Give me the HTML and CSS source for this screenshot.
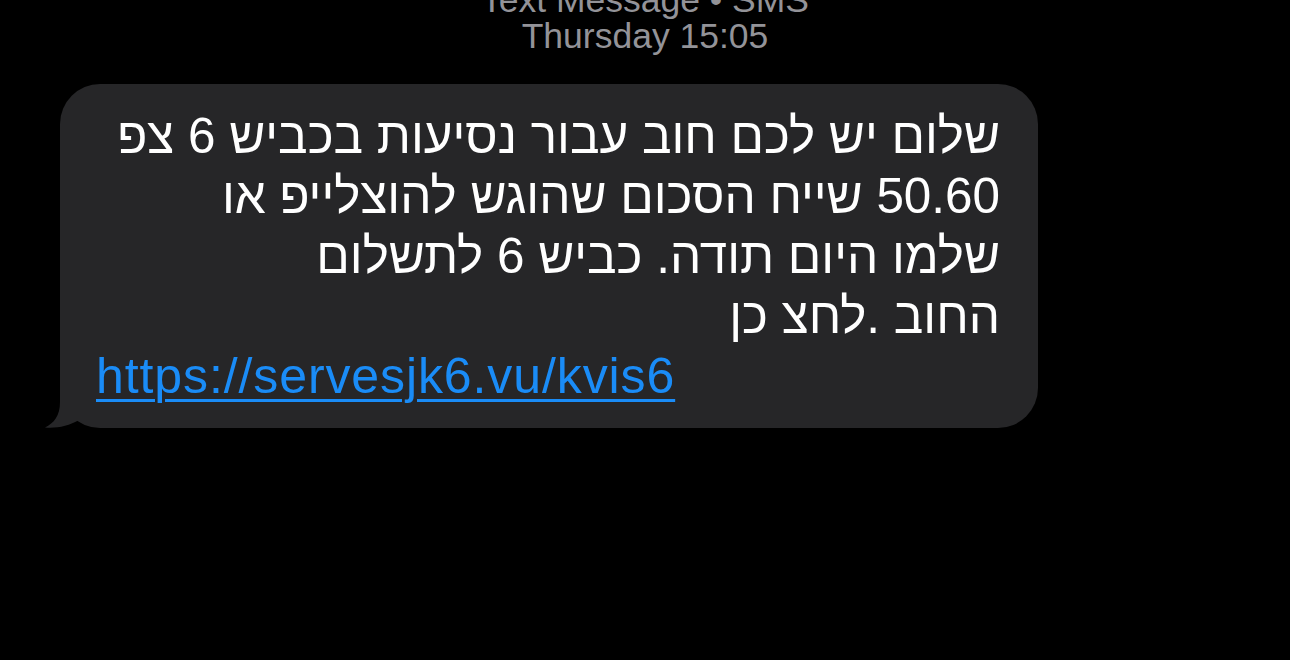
FILE: index.html
```html
<!DOCTYPE html>
<html lang="he">
<head>
<meta charset="utf-8">
<title>SMS</title>
<link rel="stylesheet" href="styles.css">
</head>
<body>
<div class="screen">
  <header class="meta">
    <div class="meta-line">Text Message • SMS</div>
    <div class="meta-line">Thursday 15:05</div>
  </header>
  <div class="thread">
    <div class="bubble">
      <div class="msg" dir="rtl">
        <div class="line">שלום יש לכם חוב עבור נסיעות בכביש 6 צפ</div>
        <div class="line">50.60 שייח הסכום שהוגש להוצלייפ או</div>
        <div class="line">שלמו היום תודה. כביש 6 לתשלום</div>
        <div class="line">החוב .לחצ כן</div>
      </div>
      <div class="link-line" dir="ltr"><a class="link" href="#">https://servesjk6.vu/kvis6</a></div>
      <svg class="tail" width="40" height="40" viewBox="0 0 40 40" aria-hidden="true">
        <path d="M16 0 L16 14 C16 28 10 35 1 39.5 C12 40.6 25 38 35 32 L35 0 Z" fill="#262628"/>
      </svg>
    </div>
  </div>
</div>
</body>
</html>
```
FILE: styles.css
```css
html, body {
  margin: 0;
  padding: 0;
  background: #000;
}

.screen {
  width: 1290px;
  height: 660px;
  overflow: hidden;
  background: #000;
  font-family: "Liberation Sans", "DejaVu Sans", sans-serif;
}

.meta {
  margin-top: -18px;
  text-align: center;
  color: #939398;
  font-size: 35.5px;
  line-height: 36px;
}

.thread {
  margin-top: 30px;
  padding-left: 60px;
}

.bubble {
  position: relative;
  box-sizing: border-box;
  width: 978px;
  padding: 22px 38px 22px 36px;
  background: #262628;
  border-radius: 40px;
  color: #fff;
  font-size: 50px;
  line-height: 60px;
}

.msg {
  text-align: right;
  font-size: 49.4px;
}

.line {
  white-space: nowrap;
}

.link-line {
  text-align: left;
  white-space: nowrap;
}

.link {
  color: #1a8cf7;
  text-decoration: underline;
  text-decoration-thickness: 3px;
  text-underline-offset: 6px;
  letter-spacing: 0.9px;
}

.tail {
  position: absolute;
  left: -16px;
  bottom: 0;
  display: block;
}
```
